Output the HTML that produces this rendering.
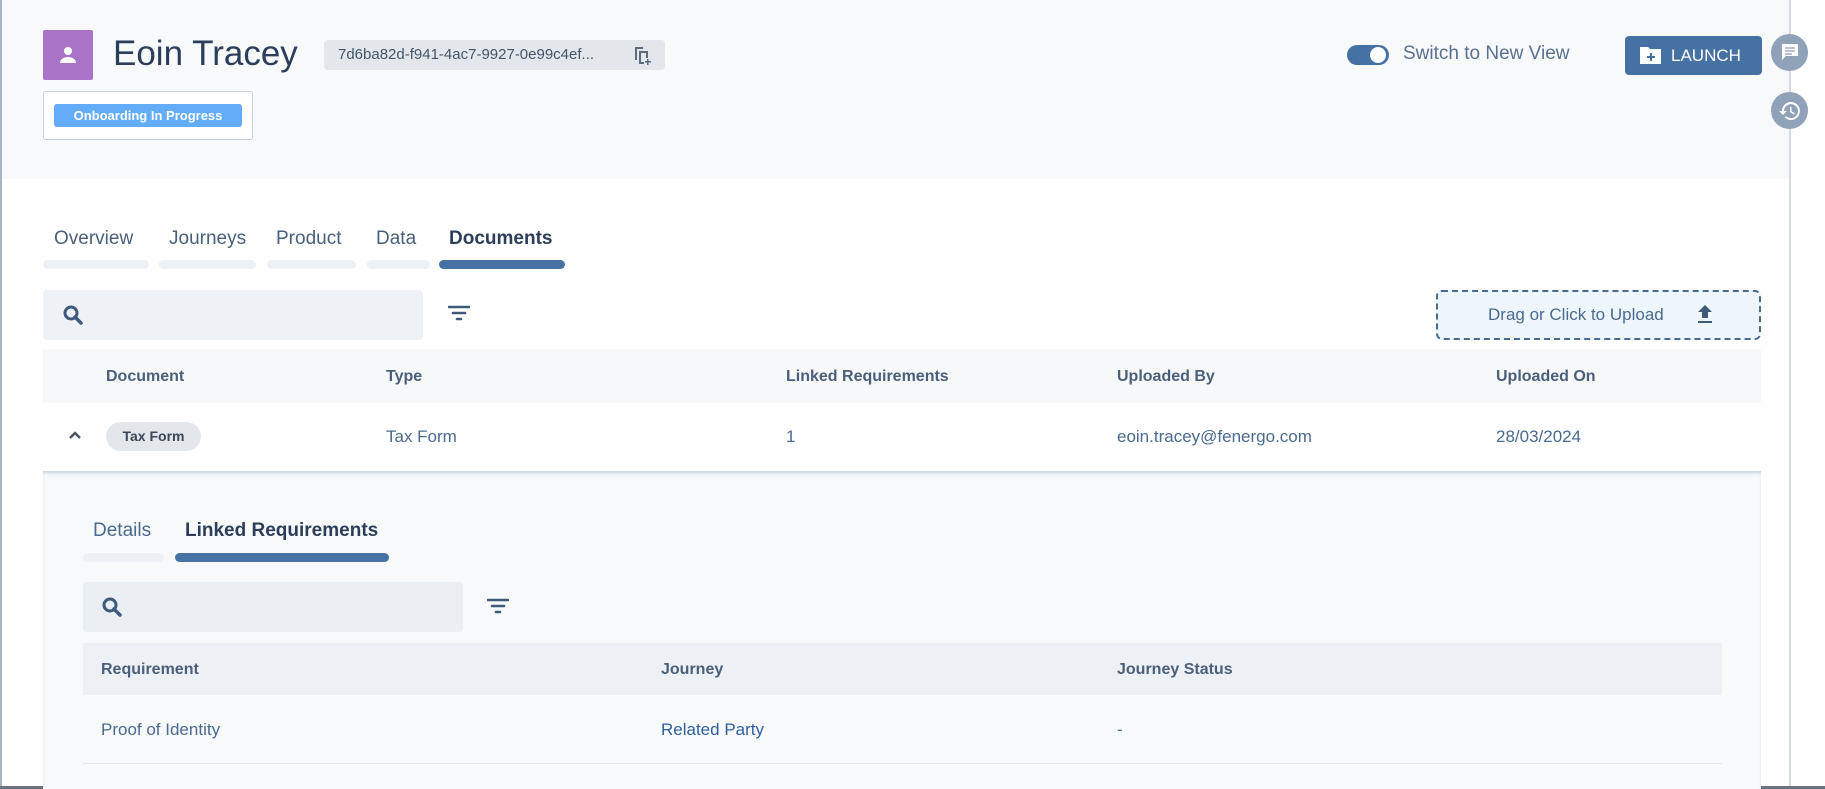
<!DOCTYPE html>
<html><head><meta charset="utf-8"><style>
*{box-sizing:border-box;margin:0;padding:0}
body{width:1825px;height:789px;overflow:hidden;background:#fff;font-family:"Liberation Sans",sans-serif;position:relative;color:#4a6a8f}
.a{position:absolute;white-space:nowrap}
.bar{position:absolute;height:9px;border-radius:5px;background:#edf1f5}
.th{position:absolute;font-size:16px;font-weight:bold;color:#4a5f7a}
.td{position:absolute;font-size:17px;color:#4a6a8f}
</style></head><body>
<div class="a" style="left:0;top:0;width:1789px;height:179px;background:#f7f9fb"></div>
<div class="a" style="left:0;top:0;width:2px;height:789px;background:#a9b4c2"></div>
<div class="a" style="left:1789px;top:0;width:2px;height:789px;background:#d5dbe3"></div>
<div class="a" style="left:0;top:786px;width:1825px;height:3px;background:#6b7280"></div>

<div class="a" style="left:43px;top:30px;width:50px;height:50px;background:#a974c8;border-radius:2px"></div>
<svg class="a" style="left:56px;top:43px" width="24" height="24" viewBox="0 0 24 24"><circle cx="12" cy="8" r="4" fill="#fff"/><path d="M4 20c0-4 4-6 8-6s8 2 8 6z" fill="#fff"/></svg>
<div class="a" style="left:113px;top:34px;font-size:35px;color:#2c3e5a">Eoin Tracey</div>
<div class="a" style="left:324px;top:40px;width:341px;height:30px;background:#e3e7ec;border-radius:4px"></div>
<div class="a" style="left:338px;top:46px;font-size:15px;color:#445566">7d6ba82d-f941-4ac7-9927-0e99c4ef...</div>
<svg class="a" style="left:632px;top:44px" width="20" height="22" viewBox="0 0 20 22"><path d="M3 3h8v2H5v11H3z M7 7h9v7h-2v-5H9v9h3v2H7z M15 15v2h-2v1.5h2V21h1.5v-2.5H19V17h-2.5v-2z" fill="#5a6b80"/></svg>
<div class="a" style="left:43px;top:91px;width:210px;height:49px;border:1px solid #c9d1db;border-radius:3px;background:#fff"></div>
<div class="a" style="left:54px;top:104px;width:188px;height:23px;background:#63adf8;border-radius:3px;color:#fff;font-size:13px;font-weight:bold;text-align:center;line-height:23px">Onboarding In Progress</div>

<div class="a" style="left:1347px;top:45px;width:42px;height:20px;background:#4672a3;border-radius:10px"></div>
<div class="a" style="left:1370px;top:47px;width:16px;height:16px;background:#fff;border-radius:50%"></div>
<div class="a" style="left:1403px;top:43px;font-size:19px;color:#5a7090">Switch to New View</div>
<div class="a" style="left:1625px;top:36px;width:137px;height:39px;background:#4672a3;border-radius:4px"></div>
<svg class="a" style="left:1639px;top:44px" width="24" height="22" viewBox="0 0 24 22"><path d="M1 3h8l2 2h11v15H1z" fill="#fff"/><path d="M11 9h2v3h3v2h-3v3h-2v-3H8v-2h3z" fill="#4672a3"/></svg>
<div class="a" style="left:1671px;top:46px;font-size:17px;color:#fff">LAUNCH</div>
<div class="a" style="left:1771px;top:34px;width:37px;height:37px;border-radius:50%;background:#8fa2b8"></div>
<svg class="a" style="left:1780px;top:42px" width="20" height="20" viewBox="0 0 20 20"><path d="M2 2h16v12H6l-4 4z" fill="#fff"/><path d="M5 6h10M5 9h10M5 12h7" stroke="#8fa2b8" stroke-width="1.3"/></svg>
<div class="a" style="left:1771px;top:92px;width:37px;height:37px;border-radius:50%;background:#8fa2b8"></div>
<svg class="a" style="left:1778px;top:99px" width="24" height="24" viewBox="0 0 24 24"><path d="M13 3a9 9 0 0 0-9 9H1l4 4 4-4H6a7 7 0 1 1 2 5l-1.4 1.4A9 9 0 1 0 13 3z" fill="#fff"/><path d="M12 8v5l4 2.5.8-1.3-3.3-2V8z" fill="#fff"/></svg>

<div class="a" style="left:54px;top:228px;font-size:19px;color:#4a5f7a">Overview</div>
<div class="a" style="left:169px;top:228px;font-size:19px;color:#4a5f7a">Journeys</div>
<div class="a" style="left:276px;top:228px;font-size:19px;color:#4a5f7a">Product</div>
<div class="a" style="left:376px;top:228px;font-size:19px;color:#4a5f7a">Data</div>
<div class="a" style="left:449px;top:228px;font-size:19px;font-weight:bold;color:#2c3e5a">Documents</div>
<div class="bar" style="left:43px;top:260px;width:106px"></div>
<div class="bar" style="left:159px;top:260px;width:97px"></div>
<div class="bar" style="left:267px;top:260px;width:89px"></div>
<div class="bar" style="left:367px;top:260px;width:63px"></div>
<div class="bar" style="left:439px;top:260px;width:126px;background:#4672a3"></div>

<div class="a" style="left:43px;top:290px;width:380px;height:50px;background:#eef2f6;border-radius:4px"></div>
<svg class="a" style="left:62px;top:304px" width="22" height="22" viewBox="0 0 22 22"><circle cx="9" cy="9" r="6" stroke="#3f5a7a" stroke-width="3" fill="none"/><path d="M13 13l6 6" stroke="#3f5a7a" stroke-width="3.5" stroke-linecap="round"/></svg>
<svg class="a" style="left:448px;top:304px" width="22" height="20" viewBox="0 0 22 20"><path d="M1 3h20M5 9h12M9 15h4" stroke="#3f5a7a" stroke-width="2.6" stroke-linecap="round"/></svg>
<div class="a" style="left:1436px;top:290px;width:325px;height:50px;border:2px dashed #4a6a8f;border-radius:6px;background:#eef6fd"></div>
<div class="a" style="left:1488px;top:305px;font-size:17px;color:#4a6a8f">Drag or Click to Upload</div>
<svg class="a" style="left:1696px;top:304px" width="18" height="20" viewBox="0 0 18 20"><path d="M9 1l7 7h-4v6H6V8H2z M2 17h14v2H2z" fill="#3f5a7a"/></svg>

<div class="a" style="left:43px;top:349px;width:1718px;height:54px;background:#f6f8fa"></div>
<div class="th" style="left:106px;top:368px">Document</div>
<div class="th" style="left:386px;top:368px">Type</div>
<div class="th" style="left:786px;top:368px">Linked Requirements</div>
<div class="th" style="left:1117px;top:368px">Uploaded By</div>
<div class="th" style="left:1496px;top:368px">Uploaded On</div>
<svg class="a" style="left:68px;top:430px" width="14" height="10" viewBox="0 0 14 10"><path d="M2 8l5-5 5 5" stroke="#4a5563" stroke-width="2.4" fill="none"/></svg>
<div class="a" style="left:106px;top:422px;width:95px;height:29px;background:#e3e7ec;border-radius:15px;font-size:14px;font-weight:bold;color:#3a4656;text-align:center;line-height:29px">Tax Form</div>
<div class="td" style="left:386px;top:427px">Tax Form</div>
<div class="td" style="left:786px;top:427px">1</div>
<div class="td" style="left:1117px;top:427px">eoin.tracey@fenergo.com</div>
<div class="td" style="left:1496px;top:427px">28/03/2024</div>

<div class="a" style="left:43px;top:471px;width:1718px;height:318px;background:#f7f9fb;box-shadow:inset 0 3px 3px -1px #c8d2dc"></div>
<div class="a" style="left:93px;top:520px;font-size:19px;color:#4a6a8f">Details</div>
<div class="a" style="left:185px;top:520px;font-size:19px;font-weight:bold;color:#2c3e5a">Linked Requirements</div>
<div class="bar" style="left:83px;top:553px;width:81px"></div>
<div class="bar" style="left:175px;top:553px;width:214px;background:#4672a3"></div>
<div class="a" style="left:83px;top:582px;width:380px;height:50px;background:#eaeff4;border-radius:4px"></div>
<svg class="a" style="left:101px;top:596px" width="22" height="22" viewBox="0 0 22 22"><circle cx="9" cy="9" r="6" stroke="#3f5a7a" stroke-width="3" fill="none"/><path d="M13 13l6 6" stroke="#3f5a7a" stroke-width="3.5" stroke-linecap="round"/></svg>
<svg class="a" style="left:487px;top:597px" width="22" height="20" viewBox="0 0 22 20"><path d="M1 3h20M5 9h12M9 15h4" stroke="#3f5a7a" stroke-width="2.6" stroke-linecap="round"/></svg>
<div class="a" style="left:83px;top:643px;width:1639px;height:52px;background:#edf1f5"></div>
<div class="th" style="left:101px;top:661px">Requirement</div>
<div class="th" style="left:661px;top:661px">Journey</div>
<div class="th" style="left:1117px;top:661px">Journey Status</div>
<div class="a" style="left:83px;top:763px;width:1639px;height:1px;background:#e2e7ed"></div>
<div class="td" style="left:101px;top:720px">Proof of Identity</div>
<div class="td" style="left:661px;top:720px;color:#2f5f9f">Related Party</div>
<div class="td" style="left:1117px;top:720px">-</div>
</body></html>
